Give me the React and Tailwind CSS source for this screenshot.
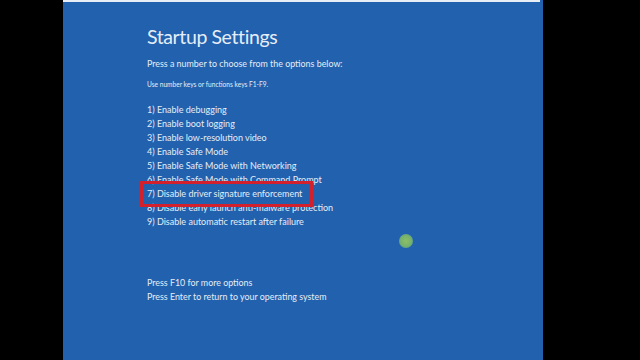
export default function App() {
  const items = [
    "1) Enable debugging",
    "2) Enable boot logging",
    "3) Enable low-resolution video",
    "4) Enable Safe Mode",
    "5) Enable Safe Mode with Networking",
    "6) Enable Safe Mode with Command Prompt",
    "7) Disable driver signature enforcement",
    "8) Disable early launch anti-malware protection",
    "9) Disable automatic restart after failure",
  ];
  return (
    <div className="w-[640px] h-[360px] bg-black flex overflow-hidden" style={{ fontFamily: 'Lato, "Open Sans", sans-serif' }}>
      <div className="w-[63px] shrink-0" />
      <div className="w-[480px] shrink-0 bg-[#2161ae] relative flex flex-col">
        <div className="h-[2px] w-[477px] bg-[#e8eef6]" />
        <div className="pl-[84px] pt-[21px] text-[#e6edf7]">
          <div className="text-[19.5px] leading-[28px] tracking-[-0.4px]">Startup Settings</div>
          <div className="text-[8.9px] leading-[14px] mt-[6px]">Press a number to choose from the options below:</div>
          <div className="text-[6.6px] leading-[10px] mt-[8px]">Use number keys or functions keys F1-F9.</div>
          <div className="mt-[14px] flex flex-col">
            {items.map((t) => (
              <div key={t} className="text-[9px] leading-[14px]">{t}</div>
            ))}
          </div>
          <div className="mt-[47px] flex flex-col">
            <div className="text-[8.9px] leading-[14px]">Press F10 for more options</div>
            <div className="text-[8.9px] leading-[14px]">Press Enter to return to your operating system</div>
          </div>
        </div>
        <div className="absolute left-[77px] top-[181px] w-[173px] h-[26px] border-[3px] border-[#d2202c]" />
        <div className="absolute left-[336px] top-[234px] w-[14px] h-[14px] rounded-full bg-[radial-gradient(circle,#8bbf6a_0%,#79b36a_50%,#4f8fa0_100%)]" />
      </div>
      <div className="flex-1" />
    </div>
  );
}
